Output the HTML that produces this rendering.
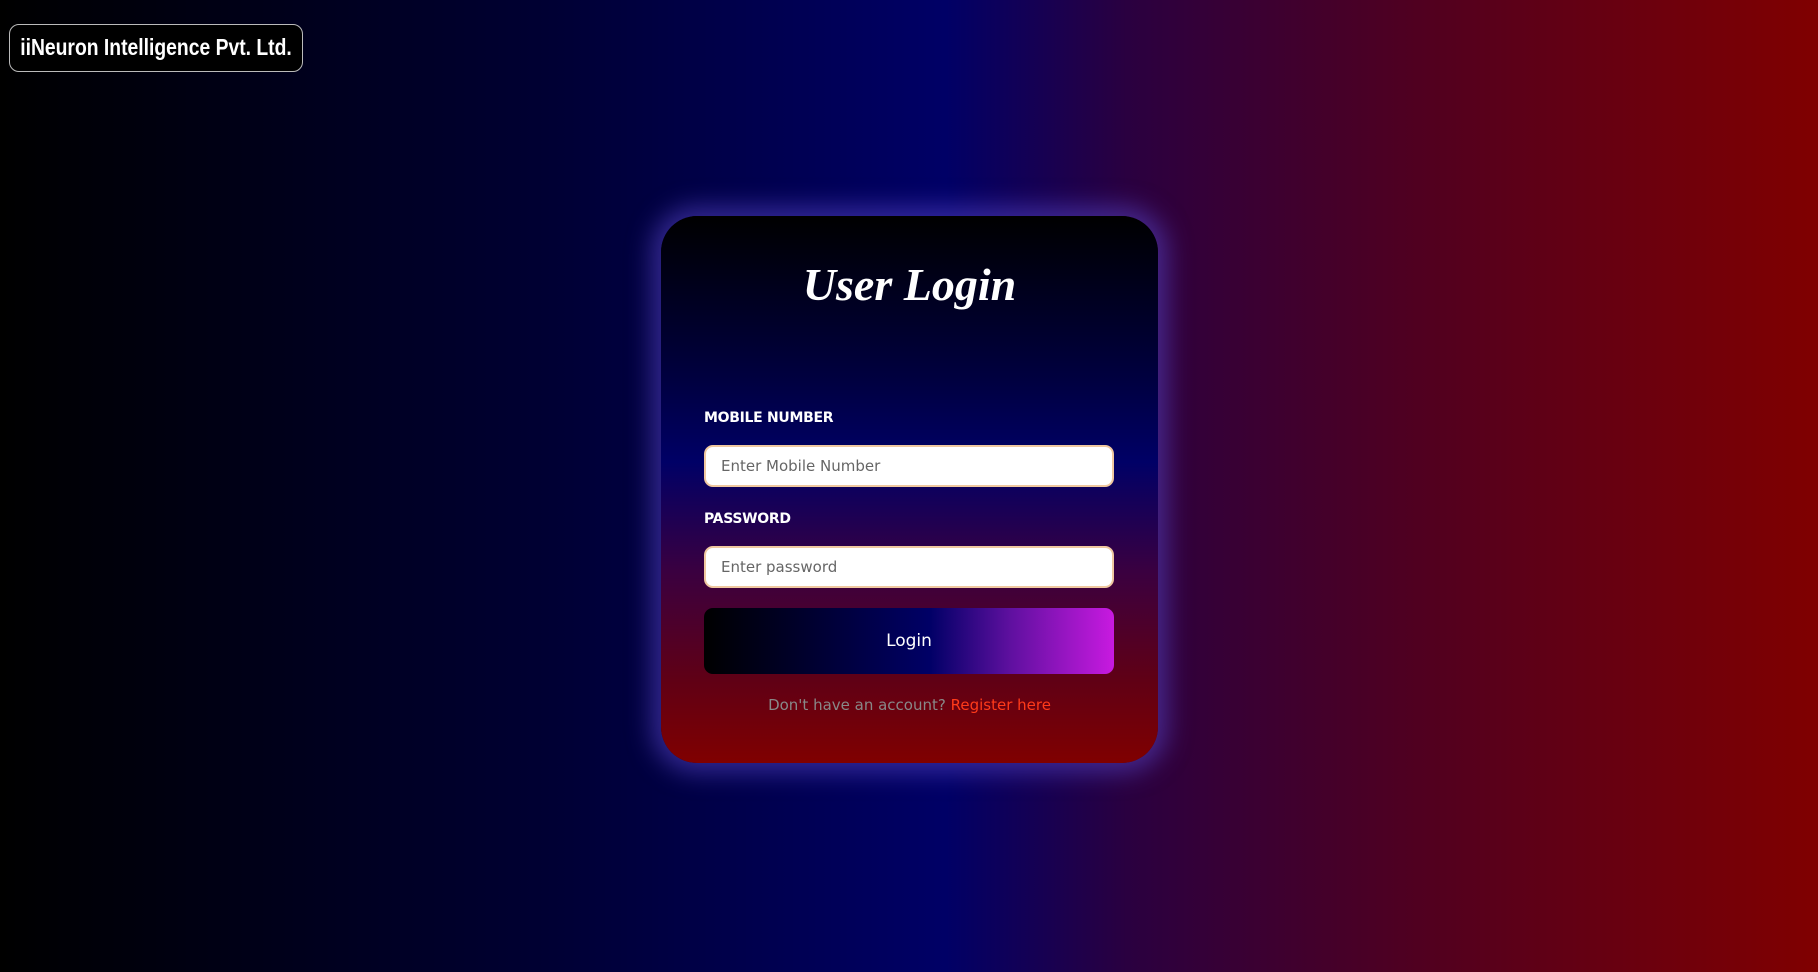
<!DOCTYPE html>
<html><head><meta charset="utf-8"><style>
html,body{margin:0;padding:0;width:1818px;height:972px;overflow:hidden}
body{background:linear-gradient(to right,#000000 0%,#000033 30%,#000066 52%,#2a0040 62%,#500020 78%,#800000 100%);font-family:"DejaVu Sans","Liberation Sans",sans-serif;position:relative}
.logo{position:absolute;left:9px;top:24px;width:294px;height:48px;border:1.5px solid #bbb;border-radius:10px;box-sizing:border-box;color:#fff;font-family:"Liberation Sans",sans-serif;font-weight:bold;font-size:23px;line-height:45px;background:#000;white-space:nowrap}
.logo span{position:absolute;left:50%;top:0;transform:translateX(-50%) scaleX(0.84)}
.card{position:absolute;left:661px;top:216px;width:497px;height:547px;border-radius:36px;background:linear-gradient(to bottom,#000000 0%,#000040 30%,#000066 45%,#3a0040 65%,#600015 85%,#800000 100%);box-shadow:0 0 24px 10px rgba(90,70,200,0.55)}
h1{margin:0;position:absolute;top:42px;left:0;right:0;text-align:center;color:#fff;font-family:"Liberation Serif",serif;font-style:italic;font-weight:bold;font-size:46px}
.lab{position:absolute;left:43px;color:#fff;font-weight:bold;font-size:14px;letter-spacing:-0.3px}
.inp{position:absolute;left:43px;width:410px;height:42px;background:#fff;border:2px solid #f0c8a0;border-radius:9px;box-sizing:border-box;color:#666;font-size:15px;line-height:38px;padding-left:15px}
.btn{position:absolute;left:43px;top:392px;width:410px;height:66px;border-radius:9px;background:linear-gradient(to right,#000 0%,#000040 35%,#000066 55%,#6010a0 75%,#c81ae0 100%);color:#fff;font-size:17px;text-align:center;line-height:66px}
.reg{position:absolute;left:0;right:0;top:480px;text-align:center;color:#888;font-size:15px}
.reg span{color:#ff3a1a}
</style></head><body>
<div class="logo"><span>iiNeuron Intelligence Pvt. Ltd.</span></div>
<div class="card">
<h1>User Login</h1>
<div class="lab" style="top:194px">MOBILE NUMBER</div>
<div class="inp" style="top:229px">Enter Mobile Number</div>
<div class="lab" style="top:295px">PASSWORD</div>
<div class="inp" style="top:330px">Enter password</div>
<div class="btn">Login</div>
<div class="reg">Don't have an account? <span>Register here</span></div>
</div>
</body></html>
